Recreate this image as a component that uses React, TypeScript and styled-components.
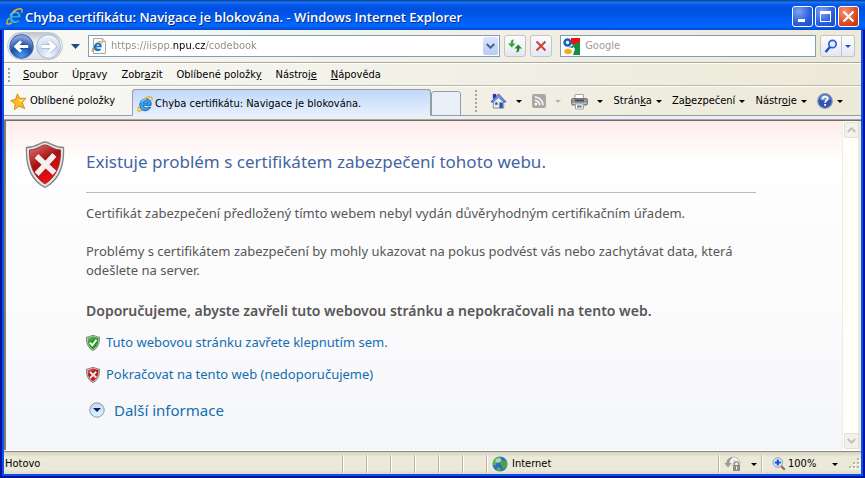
import React from "react";
import styled, { createGlobalStyle, css } from "styled-components";

const uiFont = '"DejaVu Sans Condensed", "DejaVu Sans", sans-serif';
const pageFont = '"Noto Sans", "Open Sans", sans-serif';

const GlobalStyle = createGlobalStyle`
  * { box-sizing: border-box; }
  body { margin: 0; background: #0a2c9c; }
  button, input { font: inherit; color: inherit; margin: 0; padding: 0; border: 0; background: none; outline: none; }
  a { color: inherit; text-decoration: none; }
  svg { display: block; flex: none; }
`;

const Window = styled.div`
  display: flex;
  flex-direction: column;
  min-height: 100vh;
  border: solid #0412a4;
  border-width: 0 2px 2px;
  padding: 0 2px 2px;
  background: #0c50e8;
  font-family: ${uiFont};
  font-size: 11px;
  line-height: 14px;
  color: #000;
`;

const TitleBar = styled.header`
  display: flex;
  align-items: center;
  gap: 2px;
  height: 30px;
  padding: 3px 6px 0;
  margin: 0 -4px;
  background: linear-gradient(#0a4aa0 0, #0a4aa0 1px, #1c7cf8 2px, #0a5cf0 4px, #0050e0 8px, #0054e4 14px, #0062fa 22px, #0066ff 26px, #0048d0 30px);
`;

const Title = styled.h1`
  flex: 1;
  margin: 0;
  font: 600 13px/18px "Open Sans", sans-serif;
  white-space: nowrap;
  overflow: hidden;
  color: #fff;
  text-shadow: 1px 1px 0 #0a2a80;
`;

const CaptionButton = styled.button<{ $close?: boolean }>`
  display: grid;
  place-items: center;
  width: 21px;
  height: 21px;
  border: 1px solid #fff;
  border-radius: 3px;
  background: ${(p) =>
    p.$close
      ? "radial-gradient(circle at 30% 25%, #f09478, #dc4a22 60%, #b83208)"
      : "radial-gradient(circle at 30% 25%, #7ea2f4, #2a5cdc 60%, #1848c8)"};
`;

const barTone = css`
  background: linear-gradient(90deg, #f8f8f6, #ece9d8);
`;

const NavBar = styled.div`
  ${barTone}
  display: flex;
  align-items: center;
  gap: 4px;
  height: 32px;
  padding: 0 6px 0 3px;
`;

const TravelGroup = styled.div`
  display: flex;
  align-items: center;
  justify-content: space-between;
  width: 56px;
  height: 28px;
  padding: 0 1px;
  border: 1px solid #c4c8d0;
  border-radius: 14px;
  background: linear-gradient(#c2c6ce, #f6f6f6 40%, #dcdfe4);
`;

const PlainButton = styled.button`
  display: flex;
  align-items: center;
  justify-content: center;
  gap: 4px;
  white-space: nowrap;
`;

const IconMenuButton = styled(PlainButton)<{ $tight?: boolean }>`
  gap: ${(p) => (p.$tight ? 4 : 9)}px;
`;

const RecentButton = styled(PlainButton)`
  width: 17px;
  height: 22px;
`;

const Field = styled.div<{ $grow: number }>`
  display: flex;
  align-items: center;
  gap: 5px;
  flex: ${(p) => p.$grow} 1 0;
  min-width: 0;
  height: 22px;
  padding: 0 1px 0 2px;
  border: 1px solid #7f9db9;
  background: #fff;
`;

const AddressInput = styled.input`
  flex: 1;
  min-width: 0;
  margin-left: -2px;
  color: transparent;
  background: linear-gradient(90deg, #8c8c84 62px, #000 62px, #000 94px, #8c8c84 94px);
  background-clip: text;
  -webkit-background-clip: text;
`;

const SearchInput = styled.input`
  flex: 1;
  min-width: 0;
  &::placeholder { color: #a09c90; opacity: 1; }
`;

const ComboArrow = styled.button`
  display: grid;
  place-items: center;
  width: 15px;
  height: 18px;
  border-radius: 2px;
  background: linear-gradient(#dce6fc, #b8cbf4);
`;

const LoadControls = styled.div`
  display: flex;
  gap: 4px;
  margin-right: 4px;
`;

const SquareButton = styled.button<{ $narrow?: boolean }>`
  display: grid;
  place-items: center;
  width: ${(p) => (p.$narrow ? 13 : 22)}px;
  height: 22px;
  border: 1px solid #c2c4c8;
  border-radius: 3px;
  background: linear-gradient(#fdfdfd, #e4e8f2);
`;

const SearchGroup = styled.div`
  display: flex;
  & > button:first-child { border-radius: 3px 0 0 3px; }
  & > button:last-child { border-radius: 0 3px 3px 0; border-left: 0; }
`;

const MenuBar = styled.nav`
  ${barTone}
  display: flex;
  align-items: center;
  gap: 14px;
  height: 24px;
  padding: 2px 0 0 4px;
  border-top: 1px solid #aca899;
  border-bottom: 1px solid #bcb8ac;
  box-shadow: inset 0 1px #fff;
`;

const Grip = styled.span<{ $size: number }>`
  width: 2px;
  height: ${(p) => p.$size}px;
  margin-right: -1px;
  background: repeating-linear-gradient(#a8a498 0 2px, transparent 2px 4px);
`;

const TabRow = styled.div`
  ${barTone}
  display: flex;
  align-items: center;
  height: 34px;
  border-bottom: 4px solid #e9eef8;
  box-shadow: inset 0 1px #fff, inset 0 -1px #9c9c9c;
`;

const Favorites = styled(PlainButton)`
  gap: 3px;
  width: 128px;
  justify-content: flex-start;
  padding-left: 6px;
`;

const Tab = styled.button<{ $empty?: boolean }>`
  display: flex;
  align-items: center;
  align-self: flex-end;
  gap: 2px;
  flex: ${(p) => (p.$empty ? "0 0 30px" : "0 1 299px")};
  height: ${(p) => (p.$empty ? 25 : 27)}px;
  padding: 2px 0 0 4px;
  border: 1px solid #949ca4;
  border-bottom-color: ${(p) => (p.$empty ? "#949ca4" : "#e9eef8")};
  border-radius: 3px 3px 0 0;
  background: ${(p) => (p.$empty ? "#e8eff8" : "linear-gradient(#c0d8fa, #e6effc)")};
  white-space: nowrap;
  overflow: hidden;
`;

const CommandBar = styled.div`
  display: flex;
  align-items: center;
  margin-left: 14px;
  flex: 1;
`;

const CommandItems = styled.div`
  display: flex;
  align-items: center;
  justify-content: space-between;
  flex: 1;
  padding: 0 18px 0 14px;
`;

const Viewport = styled.div`
  display: flex;
  flex: 1;
  border: solid #716f64;
  border-width: 1px 0 0 2px;
  border-left-color: #807e72;
  box-shadow: 0 -1px #aca899;
`;

const Page = styled.main`
  display: grid;
  grid-template-columns: 40px minmax(0, 670px);
  column-gap: 21px;
  align-content: start;
  flex: 1;
  padding: 20px 24px 24px 19px;
  background: linear-gradient(#ffebeb 0, #fff 42px, #fcfcfd 110px, #fbfbfc 180px, #f5f6f8 100%);
  font: 13px/19px ${pageFont};
  color: #575757;
`;

const Heading = styled.h2`
  margin: 0 0 11px;
  padding: 9px 0 18px;
  border-bottom: 1px solid #b6bacb;
  font-size: 17px;
  line-height: 24px;
  font-weight: 400;
  color: #4465a2;
`;

const Paragraph = styled.p<{ $strong?: boolean }>`
  margin: 0 0 ${(p) => (p.$strong ? 13 : 19)}px;
  padding-top: ${(p) => (p.$strong ? 2 : 0)}px;
  ${(p) => p.$strong && "font-size: 14px; font-weight: 600;"}
`;

const Choice = styled.a`
  display: flex;
  align-items: center;
  gap: 6px;
  margin-bottom: 13px;
  color: #136db0;
`;

const MoreButton = styled.button`
  display: flex;
  align-items: center;
  gap: 9px;
  padding: 3px 0 0 3px;
  font-size: 15px;
  line-height: 20px;
  color: #136db0;
`;

const ScrollTrack = styled.div`
  display: flex;
  flex-direction: column;
  justify-content: space-between;
  width: 19px;
  padding: 1px 3px 1px 1px;
  border-left: 1px solid #eeede5;
  background: linear-gradient(90deg, #fefefb 15px, #ece9d8 15px);
`;

const ScrollButton = styled.button`
  display: grid;
  place-items: center;
  width: 15px;
  height: 16px;
  border: 1px solid #e2e1d6;
  border-radius: 2px;
  background: #f2f1ea;
`;

const StatusBar = styled.footer`
  display: flex;
  align-items: center;
  height: 24px;
  padding: 3px 0 0 1px;
  border-top: 1px solid #fff;
  box-shadow: inset 0 1px #8c8a80;
  background: linear-gradient(#d0cdbc, #ece9d8 6px, #ece9d8 19px, #dcd8c6);
`;

const StatusText = styled.span`
  flex: 1;
`;

const StatusCell = styled.span<{ $width: number }>`
  display: flex;
  align-items: center;
  gap: 4px;
  width: ${(p) => p.$width}px;
  height: 18px;
  padding-left: 5px;
  border-left: 1px solid #b8b4a2;
  box-shadow: inset 1px 0 #fff;
`;

const ZoomButton = styled(PlainButton)`
  gap: 2px;
  padding-left: 5px;
  & > svg:last-child { margin-left: 14px; }
`;

const Tri = ({ color = "#000", size = 6 }: { color?: string; size?: number }) => (
  <svg width={size} height={size > 6 ? 5 : 3} viewBox="0 0 6 3" preserveAspectRatio="none" aria-hidden>
    <path d="M0 0h6L3 3z" fill={color} />
  </svg>
);

const IeLogo = ({ size = 16 }: { size?: number }) => (
  <svg width={size} height={size} viewBox="0 0 16 16" aria-hidden>
    <path d="M13.700 11.200C11.500 15.800 4.300 16 3 11.200 1.800 6.300 5.300 2.800 9 2.800c3.800 0 5.500 2.900 5.100 6.500H6.300c.2 2.800 3.400 3.200 4.600 1.900zM6.500 7h4.600c-.1-2.500-4-2.500-4.600 0z" fill="#35a8f0" stroke="#0c56a8" strokeWidth=".9" />
    <path d="M4.200 6.500C5 4.600 7 3.600 9 3.600" fill="none" stroke="#a4e0ff" strokeWidth=".9" />
    <path d="M2.600 9.500C.4 12.500.3 15.300 2.300 15.200c1 0 2-.5 3-1.200M6.500 3.600C10 1.200 13.500.2 14.700 1.300c.7.700.5 1.900-.1 3.200" fill="none" stroke="#f2b01c" strokeWidth="1.300" />
  </svg>
);

const DocIcon = () => (
  <svg width="17" height="18" viewBox="0 0 17 18" aria-hidden>
    <path d="M2.500 1.500h9l3 3v12h-12z" fill="#fbfbf8" stroke="#a8a8a0" />
    <path d="M11.500 1.500v3h3" fill="#e4e4e0" stroke="#a8a8a0" />
    <path d="M10.300 12.200c-1.600 2.800-6.500 2.600-7.300-.7C2.300 8 4.600 5.600 7.300 5.600c2.500 0 3.700 2 3.400 4.600H5.400c.2 1.700 2.100 2 3 1.300zM5.500 8.700h3c0-1.500-2.500-1.600-3 0z" fill="#1673cc" />
    <path d="M2.500 10.500C.8 12.500.6 15 2.400 14.600M6 5.800c2.500-1.700 5.400-2 4.800.6" fill="none" stroke="#e8a820" strokeWidth="1.200" />
  </svg>
);

const TravelIcon = ({ back }: { back?: boolean }) => (
  <svg width="25" height="25" viewBox="0 0 24 24" aria-hidden>
    <defs>
      <radialGradient id={back ? "backFill" : "fwdFill"} cx="50%" cy="90%" r="90%">
        <stop offset="0" stopColor={back ? "#4a9cf0" : "#f4f9ff"} />
        <stop offset=".5" stopColor={back ? "#1c4fae" : "#c8d8ec"} />
        <stop offset="1" stopColor={back ? "#a0b8e4" : "#f6f8fc"} />
      </radialGradient>
    </defs>
    <circle cx="12" cy="12" r="11.200" fill={`url(#${back ? "backFill" : "fwdFill"})`} stroke={back ? "#3a5ca0" : "#a4b4cc"} />
    <path
      d={back ? "M11.500 7L6.500 12l5 5M7 12h11.500" : "M12.500 7l5 5-5 5M17 12H5.500"}
      fill="none"
      stroke={back ? "#23509c" : "#a8b8d0"}
      strokeWidth="4.400"
    />
    <path
      d={back ? "M11.500 7L6.500 12l5 5M7 12h11.500" : "M12.500 7l5 5-5 5M17 12H5.500"}
      fill="none"
      stroke="#fff"
      strokeWidth="3"
    />
  </svg>
);

const Chevron = ({ up, color = "#4a648c" }: { up?: boolean; color?: string }) => (
  <svg width="9" height="6" viewBox="0 0 9 6" aria-hidden>
    <path d={up ? "M.7 5L4.500 1.300 8.300 5" : "M.7 1L4.500 4.700 8.300 1"} fill="none" stroke={color} strokeWidth="2" />
  </svg>
);

const RefreshIcon = () => (
  <svg width="16" height="16" viewBox="0 0 16 16" aria-hidden>
    <path d="M7 1.500C4.500 1.500 3.700 3 3.700 5.500H1L4.800 9.500l3.700-4H6c0-1.800.2-2.500 1-4z" fill="#37a22c" />
    <path d="M9 14.500c2.500 0 3.400-1.500 3.400-4H15L11.200 6.500l-3.700 4h2.600c0 1.800-.3 2.500-1.100 4z" fill="#218a1c" />
  </svg>
);

const StopIcon = () => (
  <svg width="12" height="12" viewBox="0 0 12 12" aria-hidden>
    <path d="M1.500 1.500l9 9M10.500 1.500l-9 9" stroke="#d04038" strokeWidth="2" />
  </svg>
);

const GoogleIcon = () => (
  <svg width="17" height="17" viewBox="0 0 17 17" aria-hidden>
    <path d="M8 0h9v5l-5 2-4-1z" fill="#f00f0f" />
    <path d="M9 7l8-3v13h-7l2-6z" fill="#109040" />
    <circle cx="4.500" cy="4.500" r="3" fill="none" stroke="#1d5fb8" strokeWidth="2.500" />
    <path d="M5 9l5-1v2z" fill="#1d5fb8" />
    <ellipse cx="5" cy="13.500" rx="3.800" ry="2.800" fill="#f4ae18" />
  </svg>
);

const SearchIcon = () => (
  <svg width="14" height="14" viewBox="0 0 14 14" aria-hidden>
    <circle cx="8.500" cy="5" r="3.700" fill="#e4f0ff" stroke="#2c62d4" strokeWidth="1.700" />
    <path d="M6 8l-4.500 5" stroke="#1c4cc8" strokeWidth="2.400" />
  </svg>
);

const StarIcon = () => (
  <svg width="17" height="17" viewBox="0 0 17 17" aria-hidden>
    <path d="M7.300.8l2.700 4.700 5.900-.3-3.700 4.400 2.500 6-5.700-2.400-4.600 3.500.7-5.900L.7 7.700l5.200-1.600z" fill="#fbb92c" stroke="#d08a14" strokeWidth=".9" />
    <path d="M7.300 2.500l1.700 4.200 5-.5-4 3.300z" fill="#ffe890" />
  </svg>
);

const HomeIcon = () => (
  <svg width="17" height="18" viewBox="0 0 18 18" aria-hidden>
    <path d="M3 1.500h3.500v5H3z" fill="#2430c0" />
    <path d="M3.500 9L9 3.500 14.500 9v7.500h-11z" fill="#e4eaf6" stroke="#7888a8" />
    <path d="M1 10L9 1.500 17 10h-2.500L9 4.800 3.500 10z" fill="#7ca0e4" stroke="#2c48a4" strokeWidth=".9" />
    <path d="M5.500 10.500H8V13H5.500z" fill="#3c4c78" />
    <path d="M10 10.500h3.500V16.500H10z" fill="#2c50a0" />
  </svg>
);

const FeedIcon = () => (
  <svg width="14" height="14" viewBox="0 0 14 14" aria-hidden>
    <rect width="14" height="14" rx="2" fill="#a9a9a4" />
    <circle cx="4" cy="10" r="1.400" fill="#fff" />
    <path d="M2.800 6.200a5 5 0 0 1 5 5M2.800 3a8.200 8.200 0 0 1 8.200 8.200" fill="none" stroke="#fff" strokeWidth="1.400" />
  </svg>
);

const PrinterIcon = () => (
  <svg width="17" height="17" viewBox="0 0 17 17" aria-hidden>
    <path d="M4 1.500h8.500v5H4z" fill="#fff" stroke="#a4a4a2" />
    <rect x=".5" y="5.500" width="16" height="6.500" rx="1.500" fill="#94969a" stroke="#74767a" />
    <path d="M4 7.500h9" stroke="#4c4e52" strokeWidth="2" />
    <path d="M1.500 10.500h14" stroke="#c0c2c4" />
    <path d="M4.500 11h8v5h-8z" fill="#fff" stroke="#a4a4a2" />
    <path d="M6 13.500h2" stroke="#3a80d0" strokeWidth="2" />
    <path d="M8 13.500h2" stroke="#30a080" strokeWidth="2" />
    <path d="M10 13.500h1.500" stroke="#c0a060" strokeWidth="2" />
  </svg>
);

const HelpIcon = () => (
  <svg width="16" height="16" viewBox="0 0 16 16" aria-hidden>
    <circle cx="8" cy="8" r="7.300" fill="#2c54b0" stroke="#8c98b4" strokeWidth="1.200" />
    <path d="M2.600 6a5.600 5.600 0 0 1 10.800 0C10 8 6 8 2.600 6z" fill="#7c9cdc" />
    <path d="M5.600 6.200c0-3.400 5-3.200 5-.4C10.600 7.700 8.100 7.700 8.100 9.800" fill="none" stroke="#fff" strokeWidth="1.700" />
    <rect x="7.200" y="11" width="1.900" height="1.800" fill="#fff" />
  </svg>
);

const shieldPath = "M20 1C14.500 1 14 5.800 1.500 6.500 .8 22 4 38 20 46.500 36 38 39.200 22 38.500 6.500 26 5.800 25.500 1 20 1z";
const innerShieldPath = "M20 4C15.500 4 13.500 8.300 4.500 9 4 22 7.500 35 20 43 32.500 35 36 22 35.500 9 26.500 8.300 24.500 4 20 4z";

const Shield = ({ width, height, ok }: { width: number; height: number; ok?: boolean }) => {
  const id = `${ok ? "ok" : "bad"}${width}`;
  return (
    <svg width={width} height={height} viewBox="0 0 40 48" preserveAspectRatio="none" aria-hidden>
      <defs>
        <linearGradient id={id} x1="0" y1="0" x2=".5" y2="1">
          <stop offset="0" stopColor={ok ? "#7cc470" : "#e07c7c"} />
          <stop offset=".5" stopColor={ok ? "#239a20" : "#a81010"} />
          <stop offset="1" stopColor={ok ? "#18a014" : "#f01010"} />
        </linearGradient>
      </defs>
      <path d={shieldPath} fill="#e4e4e4" stroke="#84868a" strokeWidth={width > 20 ? 1.3 : 3} />
      <path d={innerShieldPath} fill={`url(#${id})`} stroke={width > 20 ? "#8c2020" : "none"} strokeWidth=".8" />
      {ok ? (
        <path d="M11 23l7 8 12-17" fill="none" stroke="#fff" strokeWidth="5.500" />
      ) : (
        <path d="M13.500 17l14 13M27.500 16l-14 15" stroke="#f2f0f0" strokeWidth="5.500" strokeLinecap="square" />
      )}
    </svg>
  );
};

const ExpandIcon = () => (
  <svg width="16" height="16" viewBox="0 0 16 16" aria-hidden>
    <defs>
      <linearGradient id="expandFill" x1="0" y1="0" x2="0" y2="1">
        <stop offset="0" stopColor="#c8d8ec" />
        <stop offset="1" stopColor="#e0f4ff" />
      </linearGradient>
    </defs>
    <circle cx="8" cy="8" r="7.200" fill="url(#expandFill)" stroke="#8298bc" />
    <path d="M4 6h8l-4 4z" fill="#0a1c6c" />
  </svg>
);

const GlobeIcon = () => (
  <svg width="16" height="16" viewBox="0 0 16 16" aria-hidden>
    <circle cx="8" cy="8" r="7.500" fill="#2c6cc8" />
    <path d="M3 2.500C5 .8 8 .5 9.500 1.500L9 4 6.500 6.500 4 7.500 3.500 10 1 8.500C.6 6 1.500 4 3 2.500z" fill="#5cb84c" />
    <path d="M10 4.500l4.500.5c1 2 .8 5-.5 6.500l-3 2-1-3.500-2-2z" fill="#48a840" />
    <path d="M5.500 11l3 1 .5 3c-2 .3-3.500-.3-4.500-1z" fill="#58b048" />
    <ellipse cx="6.500" cy="4.500" rx="3" ry="2" fill="#fff" opacity=".5" />
  </svg>
);

const PrivacyIcon = () => (
  <svg width="18" height="16" viewBox="0 0 18 16" aria-hidden>
    <path d="M5.500 2.500A6.500 6.500 0 1 1 9 14" fill="#f4f4f0" stroke="#b8b8b2" />
    <path d="M10.500 4L8 10" stroke="#c4c4be" />
    <path d="M7 1.500C3 2.500 2.500 5 2.500 7H.3L4 11.500 7.600 7H5.500c0-2 .5-3.500 3-5z" fill="#9a9a96" />
    <rect x="9" y="9" width="7" height="6" fill="#8c8c88" />
    <path d="M10.500 9V7.500c0-2.500 4-2.500 4 0V9" fill="none" stroke="#8c8c88" strokeWidth="1.300" />
    <path d="M12.500 10.500v3" stroke="#fff" />
  </svg>
);

const ZoomIcon = () => (
  <svg width="14" height="14" viewBox="0 0 14 14" aria-hidden>
    <path d="M8.500 8.500l4.300 4.300" stroke="#a8643c" strokeWidth="2.200" />
    <circle cx="5.800" cy="5.500" r="4.800" fill="#d4e8fc" stroke="#88a0c4" />
    <path d="M5.800 2.500v6M2.800 5.500h6" stroke="#1c54d0" strokeWidth="2" />
  </svg>
);

const SizeGrip = () => (
  <svg width="12" height="12" viewBox="0 0 12 12" aria-hidden>
    {[[8, 0], [4, 4], [8, 4], [0, 8], [4, 8], [8, 8]].map(([x, y]) => (
      <g key={`${x}-${y}`}>
        <rect x={x + 1} y={y + 1} width="2" height="2" fill="#fff" />
        <rect x={x} y={y} width="2" height="2" fill="#b8b4a2" />
      </g>
    ))}
  </svg>
);

const menus: [string, string, string][] = [
  ["", "S", "oubor"],
  ["Úp", "r", "avy"],
  ["Zobr", "a", "zit"],
  ["Oblíbené položk", "y", ""],
  ["Nástroj", "e", ""],
  ["", "N", "ápověda"],
];

const commands: [string, string, string][] = [
  ["Strán", "k", "a"],
  ["Za", "b", "ezpečení"],
  ["Nástr", "o", "je"],
];

const emptyCells = [0, 1, 2, 3, 4, 5];

export default function App() {
  return (
    <>
      <GlobalStyle />
      <Window>
        <TitleBar>
          <IeLogo size={17} />
          <Title>Chyba certifikátu: Navigace je blokována. - Windows Internet Explorer</Title>
          <CaptionButton aria-label="Minimalizovat">
            <svg width="13" height="13" aria-hidden><path d="M2 9h7v3H2z" fill="#fff" /></svg>
          </CaptionButton>
          <CaptionButton aria-label="Maximalizovat">
            <svg width="13" height="13" aria-hidden><path d="M1 1h11v11H1zM2 4v7h9V4z" fillRule="evenodd" fill="#fff" /></svg>
          </CaptionButton>
          <CaptionButton $close aria-label="Zavřít">
            <svg width="13" height="13" aria-hidden><path d="M1.500 1.500l10 10M11.500 1.500l-10 10" stroke="#fff" strokeWidth="2.200" /></svg>
          </CaptionButton>
        </TitleBar>

        <NavBar>
          <TravelGroup>
            <PlainButton aria-label="Zpět"><TravelIcon back /></PlainButton>
            <PlainButton aria-label="Vpřed"><TravelIcon /></PlainButton>
          </TravelGroup>
          <RecentButton aria-label="Poslední stránky"><Tri color="#1c4c90" size={9} /></RecentButton>
          <Field $grow={414}>
            <DocIcon />
            <AddressInput aria-label="Adresa" defaultValue="https://iispp.npu.cz/codebook" />
            <ComboArrow aria-label="Zobrazit adresy"><Chevron /></ComboArrow>
          </Field>
          <LoadControls>
            <SquareButton aria-label="Aktualizovat"><RefreshIcon /></SquareButton>
            <SquareButton aria-label="Zastavit"><StopIcon /></SquareButton>
          </LoadControls>
          <Field $grow={255}>
            <GoogleIcon />
            <SearchInput aria-label="Hledat" placeholder="Google" />
          </Field>
          <SearchGroup>
            <SquareButton aria-label="Hledat"><SearchIcon /></SquareButton>
            <SquareButton $narrow aria-label="Možnosti hledání"><Tri color="#1c54c0" /></SquareButton>
          </SearchGroup>
        </NavBar>

        <MenuBar>
          <Grip $size={14} />
          {menus.map(([before, key, after]) => (
            <PlainButton key={before + key + after}>
              <span>{before}<u>{key}</u>{after}</span>
            </PlainButton>
          ))}
        </MenuBar>

        <TabRow>
          <Favorites><StarIcon />Oblíbené položky</Favorites>
          <Tab><IeLogo />Chyba certifikátu: Navigace je blokována.</Tab>
          <Tab $empty aria-label="Nová karta" />
          <CommandBar>
            <Grip $size={22} />
            <CommandItems>
              <IconMenuButton aria-label="Domů"><HomeIcon /><Tri /></IconMenuButton>
              <IconMenuButton aria-label="Informační kanály"><FeedIcon /><Tri color="#b8b4a8" /></IconMenuButton>
              <IconMenuButton aria-label="Tisk"><PrinterIcon /><Tri /></IconMenuButton>
              {commands.map(([before, key, after]) => (
                <PlainButton key={before}>
                  <span>{before}<u>{key}</u>{after}</span><Tri />
                </PlainButton>
              ))}
              <IconMenuButton $tight aria-label="Nápověda"><HelpIcon /><Tri /></IconMenuButton>
            </CommandItems>
          </CommandBar>
        </TabRow>

        <Viewport>
          <Page>
            <Shield width={40} height={48} />
            <div>
              <Heading>Existuje problém s certifikátem zabezpečení tohoto webu.</Heading>
              <Paragraph>Certifikát zabezpečení předložený tímto webem nebyl vydán důvěryhodným certifikačním úřadem.</Paragraph>
              <Paragraph>Problémy s certifikátem zabezpečení by mohly ukazovat na pokus podvést vás nebo zachytávat data, která odešlete na server.</Paragraph>
              <Paragraph $strong>Doporučujeme, abyste zavřeli tuto webovou stránku a nepokračovali na tento web.</Paragraph>
              <Choice href="#close"><Shield width={14} height={16} ok />Tuto webovou stránku zavřete klepnutím sem.</Choice>
              <Choice href="#continue"><Shield width={14} height={16} />Pokračovat na tento web (nedoporučujeme)</Choice>
              <MoreButton><ExpandIcon />Další informace</MoreButton>
            </div>
          </Page>
          <ScrollTrack>
            <ScrollButton aria-label="Posunout nahoru"><Chevron up color="#c4c2b8" /></ScrollButton>
            <ScrollButton aria-label="Posunout dolů"><Chevron color="#c4c2b8" /></ScrollButton>
          </ScrollTrack>
        </Viewport>

        <StatusBar>
          <StatusText>Hotovo</StatusText>
          {emptyCells.map((n) => <StatusCell key={n} $width={24} />)}
          <StatusCell $width={232}><GlobeIcon />Internet</StatusCell>
          <StatusCell $width={43}>
            <IconMenuButton aria-label="Filtrování InPrivate"><PrivacyIcon /><Tri /></IconMenuButton>
          </StatusCell>
          <StatusCell $width={88}>
            <ZoomButton><ZoomIcon />100%<Tri /></ZoomButton>
          </StatusCell>
          <SizeGrip />
        </StatusBar>
      </Window>
    </>
  );
}
